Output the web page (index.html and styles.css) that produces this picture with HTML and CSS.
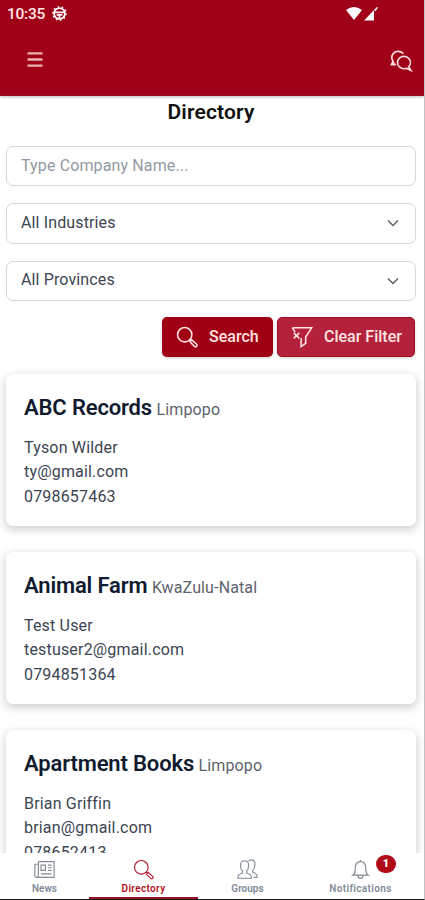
FILE: index.html
```html
<!DOCTYPE html>
<html lang="en">
<head>
<meta charset="utf-8">
<meta name="viewport" content="width=device-width, initial-scale=1">
<title>Directory</title>
<link rel="stylesheet" href="styles.css">
</head>
<body>
<svg class="defs" aria-hidden="true">
  <symbol id="search" viewBox="0 0 24 24"><circle cx="9.5" cy="9.5" r="7.8"/><path d="M15 15l1.600 1M15.200 17.200l2-2 5.300 4.700q1 1.200-.1 2.300t-2.300 0z"/></symbol>
  <symbol id="chevron" viewBox="0 0 12 8"><path d="M1 1.5l5 5 5-5"/></symbol>
</svg>
<div class="app">
  <header class="header">
    <div class="status">
      <span class="time">10:35</span>
      <svg class="wheel" viewBox="0 0 16 16"><circle cx="8" cy="8" r="5.8"/><path d="M3 6.800h10M5 9.500h6M8 9v4"/><circle class="teeth" cx="8" cy="8" r="7.100"/></svg>
      <svg class="signals" viewBox="0 0 34 16"><path d="M0 4Q8 -2 16 4L8 14zM18 14.500L28 4v10.500z"/><path d="M28 4l3-3 1 .7-2.500 3.500z"/></svg>
    </div>
    <div class="toolbar">
      <svg class="menu" viewBox="0 0 16 16"><path d="M0 1.500h16M0 8h16M0 14.500h16"/></svg>
      <svg class="chat" viewBox="0 0 24 24"><path d="M14.500 4C11 .4 5.600 1 3.200 4.300c-1.700 2.700-1.400 5.700.1 8L1.500 16h5.300M3.500 13l1 2.500"/><path d="M20.500 18.300c2.200-2.600 2.300-6.500.1-8.900-2.700-3-7.500-3.200-10.300-.6-2.900 2.700-2.900 7 0 9.700 2.200 2 5 2.400 7.600 1.300l4.800 2.400z"/></svg>
    </div>
  </header>
  <main class="main">
    <h1 class="title">Directory</h1>
    <form class="filters">
      <div class="field placeholder">Type Company Name...</div>
      <div class="field"><span>All Industries</span><svg class="chevron"><use href="#chevron"/></svg></div>
      <div class="field"><span>All Provinces</span><svg class="chevron"><use href="#chevron"/></svg></div>
      <div class="actions">
        <button type="button" class="btn btn-search"><svg class="icon"><use href="#search"/></svg><span>Search</span></button>
        <button type="button" class="btn btn-clear"><svg class="icon" viewBox="0 0 24 24"><path d="M1.500 2h21L16 12v7L11 22.500V14M1.500 2L4.500 6.500M3 7.500l6 6M9 7.500l-6 6M11 13v3"/></svg><span>Clear Filter</span></button>
      </div>
    </form>
    <section class="list">
      <article class="card"><h2 class="name"><span class="company">ABC Records</span> <small>Limpopo</small></h2><p>Tyson Wilder</p><p>ty@gmail.com</p><p>0798657463</p></article>
      <article class="card"><h2 class="name"><span class="company">Animal Farm</span> <small>KwaZulu-Natal</small></h2><p>Test User</p><p>testuser2@gmail.com</p><p>0794851364</p></article>
      <article class="card"><h2 class="name"><span class="company">Apartment Books</span> <small>Limpopo</small></h2><p>Brian Griffin</p><p>brian@gmail.com</p><p>078652413</p></article>
    </section>
  </main>
  <nav class="tabs">
    <a class="tab"><svg class="tab-icon" viewBox="0 0 24 24"><path d="M5 3h18v18H3q-2 0-2-2V6h3M5 3v15q0 3-2 3M8 7h5v6H8zM16 7h4M16 10h4M16 13h4M8 17h12"/></svg><span>News</span></a>
    <a class="tab active"><svg class="tab-icon"><use href="#search"/></svg><span>Directory</span></a>
    <a class="tab"><svg class="tab-icon" viewBox="0 0 24 24"><path d="M1 22c0-4 1.500-4.800 5.500-6v-2C4.500 12 4 9.500 4 7c0-3 2-5 4.700-5s4.600 2 4.600 5c0 2.500-.4 5-2.300 7v2c4 1.200 5.500 2 5.500 6zM13 2.500C14 1.300 15.200 1 16.300 1 19 1 20.500 3 20.500 6c0 2.500-.5 5-2.500 7v2c3.500 1 5 2 5 6h-4"/></svg><span>Groups</span></a>
    <a class="tab"><span class="bell"><svg class="tab-icon" viewBox="0 0 24 24"><path d="M12 1v2M3 18.500c3-2 3-4 3-8C6 6 8 3 12 3s6 3 6 7.500c0 4 0 6 3 8zM9 18.500c0 5 6 5 6 0"/></svg><b class="badge">1</b></span><span class="wide">Notifications</span></a>
  </nav>
</div>
</body>
</html>
```
FILE: styles.css
```css
* { box-sizing: border-box; }
body { margin: 0; font-family: Roboto, "Liberation Sans", sans-serif; color: #3d4553; background: #fff; }
svg { fill: none; stroke: currentColor; flex: none; overflow: visible; }
.defs { position: absolute; width: 0; height: 0; }
.app { height: 900px; display: flex; flex-direction: column; overflow: hidden; border-right: 1px solid #bfc1c2; border-bottom: 1px solid #171719; }
.header { flex: none; height: 96px; background: #a00018; color: #fff; border-bottom: 1px solid #8f1020; box-shadow: 0 1px 3px #0004; }
.status { height: 28px; padding: 0 44px 0 7px; display: flex; align-items: center; }
.time { font-size: 15.500px; font-weight: 500; letter-spacing: -.25px; color: #ffe9e7; }
.wheel { width: 15px; height: 15px; margin: -1px 0 0 7px; stroke-width: 1.900; }
.teeth { stroke-dasharray: 1.600 2.860; stroke-width: 1.600; }
.signals { width: 34px; height: 16px; margin: 0 0 0 auto; fill: #fff; stroke: none; }
.toolbar { height: 64px; padding: 0 12px 0 27px; display: flex; align-items: center; justify-content: space-between; }
.menu { width: 16px; height: 15px; margin-top: -1px; color: #e9b2b0; stroke-width: 2.500; }
.chat { width: 22px; height: 22px; margin-top: 1px; color: #ffdcdc; stroke-width: 1.800; }
.main { flex: 1; min-height: 0; overflow: hidden; padding: 0 8px 0 6px; }
.title { margin: 0; height: 32px; line-height: 32px; text-align: center; font-size: 21px; font-weight: 600; letter-spacing: .15px; color: #111; }
.filters { display: flex; flex-direction: column; gap: 17px; margin-top: 18px; }
.field { height: 40.300px; padding: 0 16px 2px 14px; border: 1px solid #d6d9db; border-radius: 7px; display: flex; align-items: center; justify-content: space-between; font-size: 16px; letter-spacing: .13px; }
.placeholder { color: #9299a4; }
.chevron { width: 12px; height: 8px; color: #5a606b; stroke-width: 1.500; margin-top: 2px; }
.actions { display: flex; justify-content: flex-end; gap: 4px; padding-right: 1px; margin-top: -1px; }
.btn { height: 40px; border: 0; border-radius: 5px; display: flex; align-items: center; gap: 11px; padding: 0 14px; color: #ffe3e2; font: 500 16px Roboto, sans-serif; white-space: nowrap; box-shadow: 0 1px 3px #0003; }
.btn-search { width: 111px; background: #a00014; }
.btn-clear { width: 138px; background: #b3213b; border: 1px solid #a50e29; padding: 0 13px; }
.icon { width: 22px; height: 22px; stroke-width: 1.700; }
.list { display: flex; flex-direction: column; gap: 26px; margin-top: 17px; }
.card { flex: none; height: 152px; padding: 19px 18px; border-radius: 7px; background: #fff; box-shadow: 0 3px 8px 1px #0000002e; }
.name { margin: 0 0 13px; height: 30px; line-height: 30px; font-size: 22px; font-weight: 600; color: #111b30; white-space: nowrap; }
.company { letter-spacing: -.15px; }
.name small { font-size: 16px; font-weight: 400; color: #5d636e; margin-left: -1px; letter-spacing: .13px; }
.card p { margin: 0; font-size: 16px; line-height: 24.600px; letter-spacing: .18px; }
.tabs { flex: none; height: 46px; background: #fff; display: grid; grid-template-columns: 89px 109px 99px 127px; position: relative; }
.tab { display: flex; flex-direction: column; align-items: center; gap: 3px; padding-top: 6px; font-size: 10px; font-weight: 600; color: #838b98; border-bottom: 2px solid transparent; }
.active { color: #b31329; border-color: #9c1527; letter-spacing: .35px; }
.tab-icon { display: block; width: 21px; height: 21px; stroke-width: 1.300; }
.wide { letter-spacing: .35px; }
.bell { position: relative; }
.badge { position: absolute; left: 26px; top: -4px; width: 20px; height: 18px; border-radius: 9px; background: #b00b16; color: #fff; font-size: 11px; line-height: 18px; text-align: center; }
```
